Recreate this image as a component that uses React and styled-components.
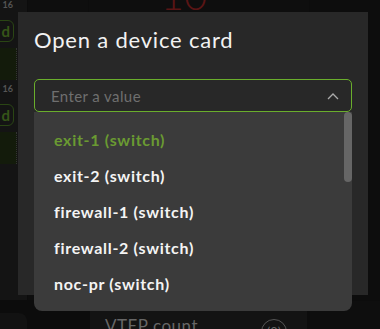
import React from 'react'
import styled, { createGlobalStyle } from 'styled-components'

const GlobalStyle = createGlobalStyle`
    html, body {
        margin: 0;
        padding: 0;
        background: #0c0c0c;
        font-family: Lato, "Noto Sans", sans-serif;
        overflow: hidden;
    }
`

const Page = styled.div`
    position: relative;
    width: 380px;
    height: 329px;
    overflow: hidden;
    background: #0c0c0c;
`

// 背景のダッシュボード
const Dashboard = styled.div`
    display: grid;
    grid-template-columns: 27px 60px 220px 1fr;
    grid-template-rows: 300px 1fr;
    gap: 1px;
    height: 100%;
`

const SideCard = styled.div`
    background: #141414;
    display: flex;
    flex-direction: column;
    align-items: flex-end;
`

const Tick = styled.div`
    font-size: 9px;
    font-weight: 700;
    color: #555;
    padding: 0 14px 0 0;
    line-height: 10px;
`

const Pill = styled.div`
    align-self: stretch;
    margin: 10px 13px 6px -20px;
    height: 20px;
    border: 1px solid #2a4514;
    border-radius: 6px;
    color: #365418;
    font-size: 15px;
    font-weight: 700;
    display: flex;
    align-items: center;
    justify-content: flex-end;
    padding: 0 3px;
`

const Bar = styled.div`
    align-self: stretch;
    height: 32px;
    margin: 0 10px 4px 0;
    background: #131b0b;
    border-right: 1px dotted #333;
`

const DarkCard = styled.div`
    background: #0e0e0e;
`

const CenterCard = styled.div`
    background: #0e0e0e;
    display: flex;
    justify-content: center;
`

const BigNumber = styled.div`
    font-size: 40px;
    line-height: 30px;
    font-weight: 300;
    color: #5a1515;
    margin: -20px 0 0 -30px;
`

const RightCard = styled.div`
    background: #0d0d0d;
    padding: 30px 0 0 6px;
    color: #444;
    font-size: 10px;
`

const BottomSide = styled.div`
    background: #121212;
    border-top-right-radius: 8px;
    margin-top: 12px;
`

const BottomCard = styled.div`
    background: #131313;
    grid-column: 2 / 4;
    margin-left: 62px;
    margin-right: 2px;
    display: flex;
    align-items: flex-start;
    justify-content: space-between;
    padding: 14px 20px 0 15px;
`

const CountLabel = styled.div`
    color: #666;
    font-size: 17px;
    letter-spacing: 0.5px;
`

const CountBadge = styled.div`
    width: 24px;
    height: 24px;
    border: 1px solid #555;
    border-radius: 50%;
    margin-top: 4px;
    color: #666;
    font-size: 13px;
    text-align: center;
    line-height: 24px;
`

// モーダル
const Modal = styled.div`
    position: absolute;
    left: 18px;
    top: 12px;
    width: 350px;
    height: 283px;
    background: #282828;
    box-sizing: border-box;
    padding: 14px 16px 0 16px;
`

const Title = styled.h2`
    margin: 0;
    font-size: 22px;
    font-weight: 400;
    color: #f2f2f2;
    letter-spacing: 0.8px;
    line-height: 28px;
`

const Select = styled.div`
    position: relative;
    margin-top: 25px;
`

const InputBox = styled.div`
    height: 33px;
    box-sizing: border-box;
    border: 1px solid #6aae2c;
    border-radius: 5px;
    display: flex;
    align-items: center;
    padding: 0 12px 0 16px;
`

const Input = styled.input`
    flex: 1;
    background: transparent;
    border: none;
    outline: none;
    color: #eee;
    font-family: inherit;
    font-size: 15px;
    letter-spacing: 0.4px;
    padding: 0;
    caret-color: #ddd;

    &::placeholder{
        color: #6f6f6f;
    }
`

const Chevron = styled.svg`
    width: 12px;
    height: 8px;
    flex: none;
`

const List = styled.ul`
    position: absolute;
    left: 0;
    right: 0;
    top: 33px;
    height: 199px;
    margin: 0;
    padding: 9px 0 0 0;
    list-style: none;
    background: #3b3b3b;
    border-radius: 0 0 8px 8px;
    box-sizing: border-box;
`

const Item = styled.li`
    height: 36px;
    display: flex;
    align-items: center;
    padding: 0 20px;
    font-size: 16px;
    font-weight: 700;
    letter-spacing: 0.7px;
    color: ${(props) => props.active ? '#6a9a32' : '#f4f4f4'};
`

const Scroll = styled.div`
    position: absolute;
    right: 0;
    top: 0;
    width: 8px;
    height: 70px;
    border-radius: 4px;
    background: #666;
`

const devices = [
    'exit-1 (switch)',
    'exit-2 (switch)',
    'firewall-1 (switch)',
    'firewall-2 (switch)',
    'noc-pr (switch)',
]

function App() {
    return (
        <Page>
            <GlobalStyle />
            <Dashboard>
                <SideCard>
                    <Tick>16</Tick>
                    <Pill>d</Pill>
                    <Bar />
                    <Tick>16</Tick>
                    <Pill>d</Pill>
                    <Bar />
                </SideCard>
                <DarkCard />
                <CenterCard>
                    <BigNumber>10</BigNumber>
                </CenterCard>
                <RightCard>T</RightCard>
                <BottomSide />
                <BottomCard>
                    <CountLabel>VTEP count</CountLabel>
                    <CountBadge>(0)</CountBadge>
                </BottomCard>
                <DarkCard />
            </Dashboard>
            <Modal>
                <Title>Open a device card</Title>
                <Select>
                    <InputBox>
                        <Input placeholder="Enter a value" autoFocus />
                        <Chevron viewBox="0 0 12 8">
                            <path d="M1 7 L6 2 L11 7" fill="none" stroke="#aaa" strokeWidth="1.3" />
                        </Chevron>
                    </InputBox>
                    <List>
                        { devices.map((name, index) =>
                            <Item key={index} active={index === 0}>
                                { name }
                            </Item>
                        ) }
                        <Scroll />
                    </List>
                </Select>
            </Modal>
        </Page>
    )
}

export default App
